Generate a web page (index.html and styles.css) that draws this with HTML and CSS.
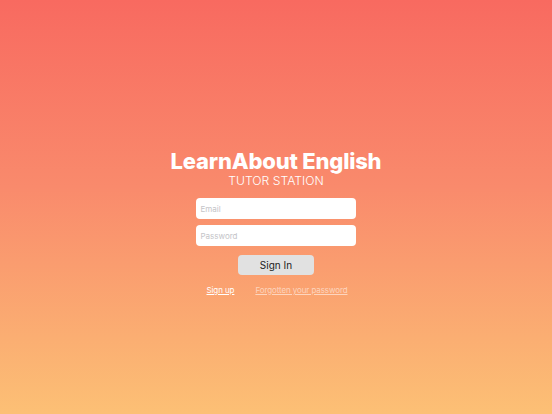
FILE: index.html
```html
<!DOCTYPE html>
<html lang="en">
<head>
  <meta charset="UTF-8">
  <meta name="viewport" content="width=device-width, initial-scale=1.0">
  <title>LearnAbout English - Tutor Station</title>
  <link rel="stylesheet" href="styles.css">
</head>
<body>
  <div class="screen">
    <div class="login">
      <h1 class="brand">LearnAbout English</h1>
      <p class="subtitle">TUTOR STATION</p>

      <input class="field" type="email" placeholder="Email">
      <input class="field" type="password" placeholder="Password">

      <button class="sign-in">Sign In</button>

      <div class="links">
        <a href="#" class="signup">Sign up</a>
        <a href="#" class="forgot">Forgotten your password</a>
      </div>
    </div>
  </div>
</body>
</html>
```

FILE: styles.css
```css
html, body {
  margin: 0;
  padding: 0;
  height: 100%;
}

body {
  font-family: 'Inter', 'Liberation Sans', sans-serif;
  background: linear-gradient(to bottom, #f86a60 0%, #f98a6c 45%, #fcc075 100%);
}

.screen {
  height: 100%;
  display: flex;
  justify-content: center;
  align-items: flex-start;
}

.login {
  margin-top: 150px;
  display: flex;
  flex-direction: column;
  align-items: center;
}

.brand {
  margin: 0;
  font-size: 22px;
  font-weight: 800;
  color: #fff;
  letter-spacing: -0.2px;
  line-height: 22px;
}

.subtitle {
  margin: 1px 0 0;
  font-size: 12.2px;
  font-weight: 300;
  color: #fff;
  line-height: 16px;
}

.field {
  box-sizing: border-box;
  width: 160px;
  height: 21px;
  margin-top: 9px;
  margin-left: 1px;
  padding: 0 4px;
  border: none;
  border-radius: 4px;
  background-color: #fff;
  font-family: inherit;
  font-size: 8px;
  color: #333;
}

.field + .field {
  margin-top: 6px;
}

.field::placeholder {
  color: #c4c4c8;
}

.sign-in {
  width: 76px;
  height: 20px;
  margin-top: 9px;
  border: none;
  border-radius: 4px;
  background-color: #e1e1e1;
  font-family: inherit;
  font-size: 10px;
  color: #222;
  cursor: pointer;
}

.links {
  display: flex;
  gap: 21px;
  margin-top: 10px;
  margin-left: 2px;
  font-size: 8px;
  letter-spacing: -0.1px;
}

.links a {
  color: #fff;
  text-decoration: underline;
}

.links .forgot {
  color: rgba(255, 255, 255, 0.55);
}
```
